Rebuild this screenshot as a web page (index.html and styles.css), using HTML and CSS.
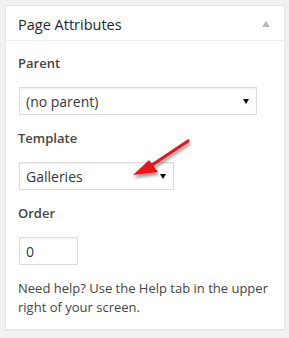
FILE: index.html
```html
<!DOCTYPE html>
<html lang="en">
  <head>
    <meta charset="UTF-8" />
    <title>Page Attributes</title>
    <link rel="stylesheet" href="styles.css">
  </head>
  <body>
    <div class="postbox">
      <div class="postbox-header">
        <h2>Page Attributes</h2>
        <span class="toggle"></span>
      </div>
      <div class="inside">
        <p class="label">Parent</p>
        <div class="select wide">
          <span>(no parent)</span>
          <span class="caret"></span>
        </div>

        <p class="label">Template</p>
        <div class="select narrow">
          <span>Galleries</span>
          <span class="caret"></span>
        </div>

        <p class="label">Order</p>
        <div class="input">0</div>

        <p class="help">Need help? Use the Help tab in the upper right of your screen.</p>
      </div>

      <!-- red annotation arrow -->
      <svg class="arrow" width="80" height="60" viewBox="0 0 80 60">
        <defs>
          <filter id="shadow" x="-20%" y="-20%" width="150%" height="150%">
            <feGaussianBlur in="SourceAlpha" stdDeviation="1.6" />
            <feOffset dx="1" dy="3" />
            <feComponentTransfer><feFuncA type="linear" slope="0.4" /></feComponentTransfer>
            <feMerge><feMergeNode /><feMergeNode in="SourceGraphic" /></feMerge>
          </filter>
        </defs>
        <g filter="url(#shadow)">
          <line x1="68" y1="11" x2="32" y2="35" stroke="#e8141a" stroke-width="3.2" stroke-linecap="round" />
          <polygon points="13,45 29,30 38,42" fill="#e8141a" />
        </g>
      </svg>
    </div>
  </body>
</html>
```

FILE: styles.css
```css
body {
  margin: 0;
  padding: 5px 4px 7px 5px;
  background: #f1f1f1;
  font-family: "Open Sans", sans-serif;
  color: #444;
}

.postbox {
  position: relative;
  background: #fff;
  border: 1px solid #e5e5e5;
  box-shadow: 0 1px 1px rgba(0, 0, 0, 0.04);
}

.postbox-header {
  display: flex;
  align-items: center;
  justify-content: space-between;
  box-sizing: border-box;
  height: 35px;
  padding: 2px 14px 0 12px;
  border-bottom: 1px solid #eee;
}

.postbox-header h2 {
  margin: 0;
  font-size: 14.5px;
  font-weight: 400;
  color: #23282d;
}

.toggle {
  width: 0;
  height: 0;
  border-left: 4px solid transparent;
  border-right: 4px solid transparent;
  border-bottom: 6px solid #b4b9be;
}

.inside {
  padding: 13px 12px 12px;
}

.label {
  margin: 0 0 15px;
  font-size: 13px;
  font-weight: 600;
  line-height: 18px;
  color: #444;
}

.select,
.input {
  box-sizing: border-box;
  display: flex;
  align-items: center;
  justify-content: space-between;
  height: 28px;
  margin: 0 0 14px 1px;
  padding: 0 7px 0 6px;
  border: 1px solid #ddd;
  box-shadow: inset 0 1px 2px rgba(0, 0, 0, 0.07);
  font-size: 14px;
  color: #32373c;
}

.wide {
  width: 238px;
}

.narrow {
  width: 155px;
}

.caret {
  width: 0;
  height: 0;
  border-left: 3px solid transparent;
  border-right: 3px solid transparent;
  border-top: 5px solid #000;
}

.input {
  width: 59px;
}

.help {
  margin: 0;
  font-size: 13px;
  line-height: 19px;
  color: #444;
}

.arrow {
  position: absolute;
  left: 114px;
  top: 124px;
}
```
